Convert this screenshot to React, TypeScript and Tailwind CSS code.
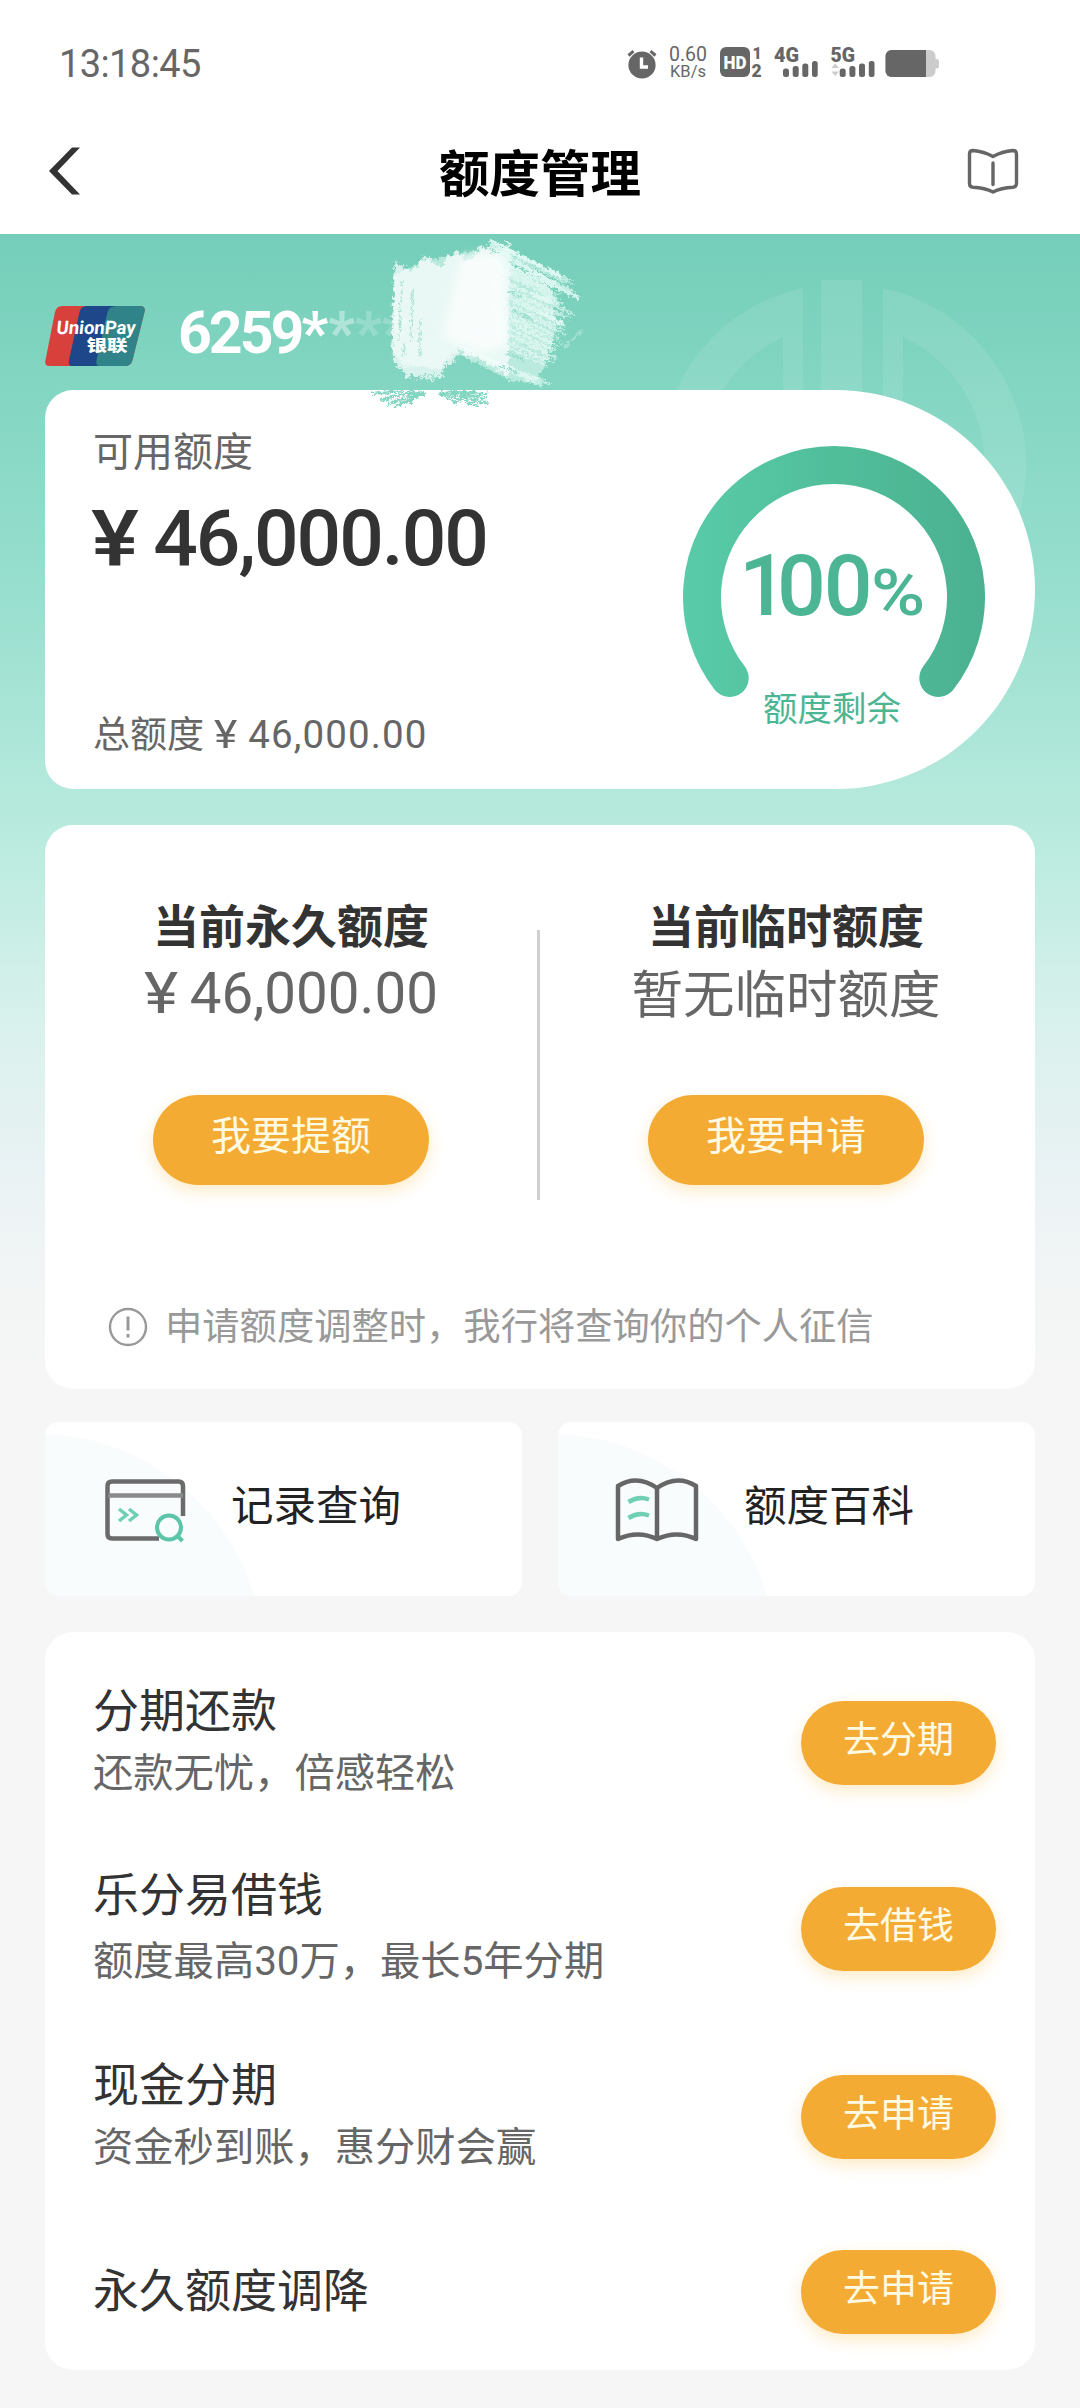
import type { ReactNode } from "react";

function Num({ children, className = "" }: { children: ReactNode; className?: string }) {
  return <span className={`font-['Roboto',sans-serif] leading-none ${className}`}>{children}</span>;
}

function Yen({ className }: { className: string }) {
  return <span className={`inline-block origin-left scale-x-115 ${className}`}>¥</span>;
}

const promos = [
  {
    title: "分期还款",
    desc: "还款无忧，倍感轻松",
    action: "去分期",
    row: "mt-[42px]",
    line: "leading-[62px]",
  },
  {
    title: "乐分易借钱",
    desc: (
      <>
        额度最高<Num>30</Num>万，最长<Num>5</Num>年分期
      </>
    ),
    action: "去借钱",
    row: "mt-[56px]",
    line: "leading-[65px]",
  },
  {
    title: "现金分期",
    desc: "资金秒到账，惠分财会赢",
    action: "去申请",
    row: "mt-[58px]",
    line: "leading-[62px]",
  },
  {
    title: "永久额度调降",
    desc: "",
    action: "去申请",
    row: "mt-[45px]",
    line: "leading-[62px]",
  },
];

function StatusBar() {
  return (
    <div className="flex h-[110px] items-start pt-[45px] pl-[60px] font-['Roboto',sans-serif]">
      <span className="mt-[1px] ml-[-1px] w-[568px] text-[38px] leading-9 tracking-[-0.600px] text-[#666]">13:18:45</span>
      <svg width="30" height="30" viewBox="0 0 30 30" className="mt-[4px]" fill="none">
        <circle cx="15" cy="16" r="13.6" fill="#666" />
        <path d="M1.5 6.500 6.500 2.200M28.500 6.500 23.500 2.200" stroke="#666" strokeWidth="3" />
        <path d="M14.500 8.500v9.500H21" stroke="#fff" strokeWidth="3.400" />
      </svg>
      <div className="mt-[1px] ml-[10px] flex w-[42px] flex-col items-center text-[#666]">
        <span className="text-[19.500px] leading-[18px]">0.60</span>
        <span className="text-[16.500px] leading-[16px]">KB/s</span>
      </div>
      <svg width="222" height="40" viewBox="718 43 222 40" className="mt-[-3px] ml-[9px] overflow-visible">
        <rect x="720" y="48" width="30" height="30" rx="6" fill="#666" />
        <text x="735" y="70" textAnchor="middle" fontSize="19" fontWeight="900" fill="#fff" textLength="23" lengthAdjust="spacingAndGlyphs">
          HD
        </text>
        <g fill="#666" fontWeight="900">
          <text x="752.500" y="60" fontSize="16">1</text>
          <text x="751.500" y="77.500" fontSize="17.500">2</text>
          <text x="774" y="62.500" fontSize="20.500" textLength="25" lengthAdjust="spacingAndGlyphs">4G</text>
          <text x="830.500" y="62.500" fontSize="20.500" textLength="24.500" lengthAdjust="spacingAndGlyphs">5G</text>
        </g>
        <g fill="#666">
          <rect x="783" y="69.500" width="6" height="8.500" rx="2.500" />
          <rect x="792.700" y="67" width="6" height="11" rx="2.500" />
          <rect x="802.300" y="64.500" width="6" height="13.500" rx="2.500" />
          <rect x="812" y="62" width="5.700" height="16" rx="2.500" />
          <rect x="839.700" y="69.500" width="6" height="8.500" rx="2.500" />
          <rect x="849.400" y="67" width="6" height="11" rx="2.500" />
          <rect x="859" y="64.500" width="6" height="13.500" rx="2.500" />
          <rect x="868.800" y="62" width="5.700" height="16" rx="2.500" />
        </g>
        <path d="m831.500 69 3.700-4.500 3.700 4.500ZM831.500 72.500h7.400l-3.700 4.500Z" fill="#ccc" />
        <rect x="885.500" y="51" width="50" height="27" rx="6" fill="#ccc" />
        <rect x="933" y="60" width="6" height="9.500" rx="2.500" fill="#ccc" />
        <path d="M891.500 51H926v27h-34.500a6 6 0 0 1-6-6V57a6 6 0 0 1 6-6Z" fill="#666" />
      </svg>
    </div>
  );
}

function NavBar() {
  return (
    <div className="flex h-[124px] items-start justify-between pr-[60px] pl-[46px]">
      <svg width="50" height="50" viewBox="0 0 50 50" className="mt-[36px]">
        <path d="M26 1.500h8L11.500 25 34 48.500h-8L3 25Z" fill="#333" />
      </svg>
      <h1 className="mt-[22px] ml-[18px] text-[50.500px] leading-[76px] font-bold text-black">额度管理</h1>
      <svg width="54" height="50" viewBox="966 146 54 50" className="mt-[36px]" fill="none">
        <path
          d="M973 150.500Q984 151.500 993 156.500Q1002 151.500 1013 150.500Q1016.500 150.500 1016.500 154V183.500Q1016.500 187 1013 187.300Q1001 188 993 192Q985 188 973 187.300Q969.500 187 969.500 183.500V154Q969.500 150.500 973 150.500Z"
          stroke="#666"
          strokeWidth="3.400"
          strokeLinejoin="round"
        />
        <path d="M993 163v21.500" stroke="#666" strokeWidth="3.400" strokeLinecap="round" />
      </svg>
    </div>
  );
}

function UnionPayLogo() {
  return (
    <svg width="100" height="60" viewBox="0 0 100 60">
      <defs>
        <clipPath id="up">
          <path d="M17 0H95q6 0 4.500 6L87.500 54q-1.500 6-7.500 6H5Q-1 60 .5 54L10 6q1.500-6 7-6Z" />
        </clipPath>
      </defs>
      <g clipPath="url(#up)">
        <rect width="100" height="60" fill="#d8403c" />
        <path d="M42 0Q36 0 34.500 6L24 54q-1 6 3 6h40L80 0Z" fill="#1d4789" />
        <path d="M72 0Q64 0 62.500 6L51.500 54q-1 6 3 6H100V0Z" fill="#31838a" />
      </g>
      <g fill="#fff" fontWeight="700">
        <text
          x="11"
          y="28.500"
          fontSize="18.500"
          textLength="79"
          lengthAdjust="spacingAndGlyphs"
          transform="skewX(-6) translate(3 0)"
          className="font-['Roboto',sans-serif]"
        >
          UnionPay
        </text>
        <text x="41.500" y="45" fontSize="15.500" fontWeight="900" textLength="41" lengthAdjust="spacingAndGlyphs">
          银联
        </text>
      </g>
    </svg>
  );
}

// small deterministic generator so that the chalk strokes are stable
function seeded(seed: number) {
  let s = seed;
  return () => {
    s = (s * 16807) % 2147483647;
    return s / 2147483647;
  };
}

function buildStrokes() {
  const rnd = seeded(41);
  const down: string[] = [];
  const across: string[] = [];
  for (let x = 391; x < 506; x += 1.7) {
    const t = (x - 391) / 117;
    const wave = Math.sin((x - 400) / 4.5) * 6;
    const top = 266 - t * 22 + wave + rnd() * 5;
    let bottom = 376;
    if (x < 406) bottom = 358 + (x - 391) * 1.6;
    else if (x > 440 && x < 454) bottom = 369 - (x - 440) * 0.8;
    else if (x >= 454) bottom = 350 + (x - 454) * 0.45;
    bottom += rnd() * 8 - 4;
    down.push(`M${x + 5} ${top}Q${x + 1} ${(top + bottom) / 2} ${x + 3} ${bottom}`);
  }
  // slanted hatching, fanning out towards the lower right
  for (let i = 0; i < 70; i++) {
    const startX = i < 46 ? 490 + rnd() * 8 : 450 + (i - 46) * 1.8;
    const startY = i < 46 ? 243 + i * 2.2 : 342 + (i - 46) * 0.9;
    const edge = i < 22 ? 566 + Math.sin(i / 2) * 10 : 566 - (i - 22) * 0.55;
    const endX = edge - rnd() * 12 + (i % 9 === 0 ? 6 : 0);
    const endY = Math.min(388 - rnd() * 8, startY + (endX - startX) * 0.48);
    across.push(`M${startX} ${startY}L${endX} ${endY}`);
  }
  return { down: down.join(""), across: across.join("") };
}

const strokes = buildStrokes();

function ChalkMark() {
  return (
    <svg className="pointer-events-none absolute top-0 left-[320px]" width="280" height="190" viewBox="320 234 280 190" fill="none">
      <defs>
        <filter id="chalk" x="320" y="234" width="280" height="190" filterUnits="userSpaceOnUse">
          <feTurbulence type="fractalNoise" baseFrequency="0.3" numOctaves="3" seed="4" result="n" />
          <feDisplacementMap in="SourceGraphic" in2="n" scale="8" xChannelSelector="R" yChannelSelector="G" />
        </filter>
        <filter id="haze">
          <feGaussianBlur stdDeviation="4" />
        </filter>
      </defs>
      <g filter="url(#chalk)">
        <path d="M394 276 420 262 490 248 508 262 552 290 556 330 545 366 534 383 510 380 455 352 440 368 404 366 392 350Z" fill="#f4fffc" opacity="0.5" />
        <path d={strokes.down} stroke="#fff" strokeWidth="2.200" opacity="0.7" />
        <path d={strokes.across} stroke="#f0fffb" strokeWidth="1.700" opacity="0.6" />
        <path d="M490 241l72 36M490 245l78 48M500 262l80 36M530 292l30 12M540 312l24 12" stroke="#e3faf4" strokeWidth="3.500" opacity="0.85" />
        <path d="M508 291l14 6M512 310l22 10M506 352l18 8M500 366l20 8" stroke="#83d6c2" strokeWidth="1.500" opacity="0.8" />
        <path d="M402 280l-3 60M413 290l-2 50M420 320v36M404 345v12" stroke="#8bd8c6" strokeWidth="1.400" opacity="0.7" />
        <path d="M555 338l10 8 18-16" stroke="#a9e3d6" strokeWidth="2" />
        <path
          d="M372 394l30-3M380 400l36-9M388 404l34-12M394 407l32-15M404 405l22-13M440 392l38 14M446 391l42 13M452 391l34 8M460 391l28 4M438 393l20 11"
          stroke="#83d6c2"
          strokeWidth="2.500"
        />
      </g>
      <path d="M462 256 502 252 506 345 484 352 442 336Z" fill="#fff" opacity="0.7" filter="url(#haze)" />
    </svg>
  );
}

function Watermark() {
  return (
    <svg className="absolute top-[40px] left-[650px]" width="385" height="300" viewBox="650 274 385 300" fill="#fff" fillOpacity="0.09">
      <rect x="821" y="280" width="41" height="280" />
      <path d="M803 288A181 181 0 0 0 803 642V337H783V593A141 141 0 0 1 783 337H803Z" />
      <path d="M883 288A181 181 0 0 1 883 642V337H903V593A141 141 0 0 0 903 337H883Z" />
    </svg>
  );
}

function Gauge() {
  return (
    <div className="relative mt-[56px] mr-[50px] h-[300px] w-[302px] text-[#4cb594]">
      <svg width="302" height="262" viewBox="0 0 302 262" fill="none">
        <defs>
          <linearGradient id="ring" x1="0" x2="302" y1="0" y2="0" gradientUnits="userSpaceOnUse">
            <stop offset="0" stopColor="#59cba8" />
            <stop offset="0.5" stopColor="#51be9a" />
            <stop offset="1" stopColor="#4bb190" />
          </linearGradient>
        </defs>
        <path d="M46.700 232A132 132 0 1 1 255.300 232" stroke="url(#ring)" strokeWidth="38" strokeLinecap="round" />
      </svg>
      <div className="absolute top-[80px] left-[56px] flex items-baseline font-['Roboto',sans-serif] leading-[120px] font-medium">
        <span className="text-[86px] tracking-[-2px]">
          <span className="tracking-[-11px]">1</span>00
        </span>
        <span className="origin-left scale-x-115 text-[64px]">%</span>
      </div>
      <p className="absolute inset-x-0 top-[235px] ml-[-4px] text-center text-[34.500px] leading-[50px]">额度剩余</p>
    </div>
  );
}

function PillButton({ className, children }: { className: string; children: ReactNode }) {
  return (
    <button
      className={`flex shrink-0 justify-center rounded-full bg-[#f4ab33] text-[#fffbe3] shadow-[0_6px_16px_rgba(250,190,70,0.3)] ${className}`}
    >
      {children}
    </button>
  );
}

type LimitColumnProps = {
  width: string;
  title: string;
  value: ReactNode;
  valueStyle: string;
  action: string;
};

function LimitColumn({ width, title, value, valueStyle, action }: LimitColumnProps) {
  return (
    <div className={`flex flex-col items-center ${width}`}>
      <h2 className="mt-[63px] text-[46px] leading-[70px] font-bold text-[#333]">{title}</h2>
      <p className={`h-[66px] text-[#666] ${valueStyle}`}>{value}</p>
      <PillButton className="mt-[71px] h-[90px] w-[276px] text-[40px] leading-[76px]">{action}</PillButton>
    </div>
  );
}

function Shortcut({ icon, label, pad }: { icon: ReactNode; label: string; pad: string }) {
  return (
    <div className="relative flex h-[174px] w-[477px] overflow-hidden rounded-[14px] bg-white">
      <div className="absolute top-[12px] left-[-232px] size-[450px] rounded-full bg-[#f8fcfd]" />
      <div className={`relative flex w-[186px] pt-[54px] ${pad}`}>{icon}</div>
      <span className="relative mt-[49px] text-[42.500px] leading-[64px] text-[#222]">{label}</span>
    </div>
  );
}

const recordIcon = (
  <svg width="84" height="68" viewBox="0 0 84 68" fill="none">
    <path d="M56 62.500H9q-4.500 0-4.500-4.500V10q0-4.500 4.500-4.500h66.500q4.500 0 4.500 4.500v30" stroke="#6b6b6b" strokeWidth="4.500" />
    <path d="M5 19.500h75" stroke="#8a8a8a" strokeWidth="4.500" />
    <path d="m16 33 7.500 6-7.500 6M26 33l7.500 6-7.500 6" stroke="#6fd0b6" strokeWidth="3.500" />
    <circle cx="66" cy="51.500" r="12" stroke="#5cc4a9" strokeWidth="4" />
    <path d="m74.500 60 5 5" stroke="#5cc4a9" strokeWidth="4" />
  </svg>
);

const wikiIcon = (
  <svg width="90" height="68" viewBox="0 0 90 68" fill="none" strokeLinejoin="round">
    <path d="M44 12Q24-2 5 10V63Q25 54 44 63Q64 54 83 63V10Q64-2 44 12V63" stroke="#666" strokeWidth="4.500" />
    <path d="M15.500 26q10-6.500 20.500-2.500M15.500 42q10-6.500 20.500-2.500" stroke="#6fd0b6" strokeWidth="4.500" />
  </svg>
);

export default function App() {
  return (
    <div className="h-[2408px] w-[1080px] overflow-hidden bg-[#f6f6f6] font-['Noto_Sans_CJK_SC',sans-serif]">
      <header className="h-[234px] bg-white">
        <StatusBar />
        <NavBar />
      </header>

      <main className="relative bg-[linear-gradient(180deg,#74ceb9_0,#83d6c2_156px,#99dfcf_366px,#b4e9dc_560px,#bfece1_640px,#d9f1ec_790px,#e9f2f4_930px,#f3f5f5_1060px,#f6f6f6_1150px)] px-[45px]">
        <Watermark />

        <div className="flex h-[156px] items-start pt-[72px]">
          <UnionPayLogo />
          <div className="mt-[-15px] ml-[33px] flex font-['Roboto',sans-serif] text-[59px] leading-[84px] font-bold text-white">
            <span className="tracking-[-3px]">6259</span>
            <span>*</span>
            <span className="opacity-40">*</span>
            <span className="opacity-20">**</span>
          </div>
        </div>

        <section className="relative flex h-[399px] justify-between rounded-l-[28px] rounded-r-[200px] bg-white">
          <div className="flex flex-col pl-[48px]">
            <p className="mt-[29px] text-[40px] leading-[60px] text-[#666]">可用额度</p>
            <p className="mt-[9px] ml-[-2px] font-['Roboto',sans-serif] text-[78.500px] leading-[100px] font-medium tracking-[-2px] text-[#333]">
              <Yen className="mr-[5px]" /> 46,000.00
            </p>
            <p className="mt-[114px] text-[37px] leading-[60px] text-[#666]">
              总额度{" "}
              <Num className="text-[38.500px] tracking-[1.100px]">
                <Yen className="mr-[2px] ml-[2px]" /> 46,000.00
              </Num>
            </p>
          </div>
          <Gauge />
        </section>

        <section className="mt-[36px] h-[564px] rounded-[28px] bg-white">
          <div className="relative flex h-[460px]">
            <LimitColumn
              width="w-[492px]"
              title="当前永久额度"
              value={
                <>
                  <Yen className="mr-[2px]" /> 46,000.00
                </>
              }
              valueStyle="font-['Roboto',sans-serif] text-[56.500px] leading-[72px]"
              action="我要提额"
            />
            <div className="absolute top-[105px] left-[492px] h-[270px] w-[3px] bg-[#cfcfcf]" />
            <LimitColumn
              width="w-[498px]"
              title="当前临时额度"
              value="暂无临时额度"
              valueStyle="text-[51.500px] leading-[66px]"
              action="我要申请"
            />
          </div>
          <div className="flex items-center pl-[63px] text-[#999]">
            <svg width="40" height="40" viewBox="0 0 40 40" fill="none" className="mt-[5px]">
              <circle cx="20" cy="20" r="18" stroke="#999" strokeWidth="2.400" />
              <path d="M20 9.500v14M20 27v3.500" stroke="#999" strokeWidth="3" />
            </svg>
            <p className="ml-[17px] text-[37.300px] leading-[78px]">申请额度调整时，我行将查询你的个人征信</p>
          </div>
        </section>

        <div className="mt-[33px] flex justify-between">
          <Shortcut icon={recordIcon} label="记录查询" pad="pl-[58px]" />
          <Shortcut icon={wikiIcon} label="额度百科" pad="pl-[55px]" />
        </div>

        <section className="mt-[36px] h-[738px] overflow-hidden rounded-[28px] bg-white pr-[39px] pl-[48px]">
          {promos.map((item) => (
            <div key={item.title} className={`flex h-[130px] items-center justify-between ${item.row}`}>
              <div className={item.line}>
                <h3 className="mt-[-1px] mb-[1px] text-[46px] text-[#333]">{item.title}</h3>
                {item.desc && <p className="text-[40.300px] text-[#666]">{item.desc}</p>}
              </div>
              <PillButton className="mt-[8px] h-[84px] w-[195px] text-[37px] leading-[73px]">{item.action}</PillButton>
            </div>
          ))}
        </section>

        <ChalkMark />
      </main>
    </div>
  );
}
